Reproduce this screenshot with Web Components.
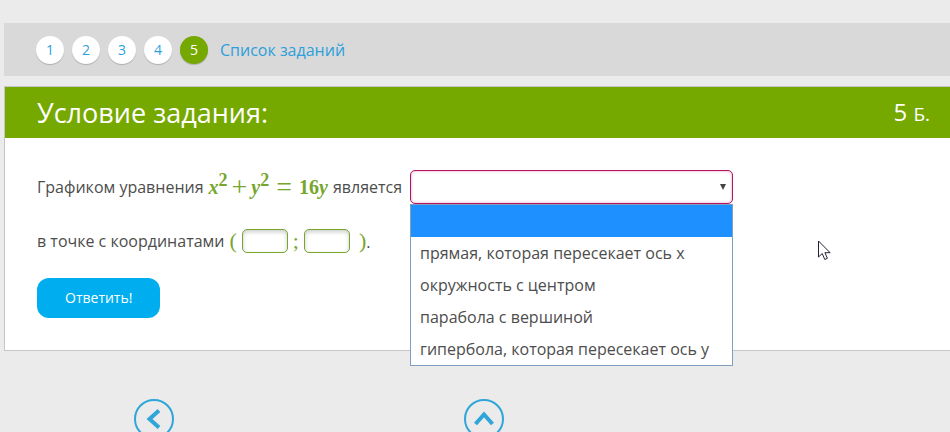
<!DOCTYPE html>
<html lang="ru">
<head>
<meta charset="utf-8">
<title>Условие задания</title>
<style>
    body {
        margin: 0;
        background: #ebebeb;
        color: #4d4d4d;
        font: 16px/24px "Open Sans", "Noto Sans", sans-serif;
    }
</style>
</head>
<body>

<test-page>
    <task-steps slot="steps" count="5" current="5">Список заданий</task-steps>
    <task-card>
        <span slot="title">Условие задания:</span>
        <span slot="points">5</span>
        <task-line>
            <span>Графиком уравнения</span>
            <math-formula></math-formula>
            <span>является</span>
            <drop-down label="Вид графика">
                <span>прямая, которая пересекает ось x</span>
                <span>окружность с центром</span>
                <span>парабола с вершиной</span>
                <span>гипербола, которая пересекает ось y</span>
            </drop-down>
        </task-line>
        <task-line>
            <span>в точке с координатами</span>
            <point-input></point-input>
        </task-line>
        <answer-button>Ответить!</answer-button>
    </task-card>
    <round-link slot="nav" direction="left" label="Предыдущее задание"></round-link>
    <round-link slot="nav" direction="up" label="Список заданий"></round-link>
</test-page>
<mouse-pointer></mouse-pointer>

<script>
window.customElements.define("test-page", class extends HTMLElement {

    #template = `
        <style>
            :host {
                display: block;
                padding: 23px 0 0 4px;
                overflow: hidden;
            }

            main {
                margin-top: 10px;
            }

            nav {
                display: flex;
                gap: 290px;
                padding: 48px 130px 0;
            }
        </style>

        <slot name="steps"></slot>
        <main><slot></slot></main>
        <nav><slot name="nav"></slot></nav>
    `;

    constructor() {
        super();
        this.attachShadow({ mode: "open" });
        this.shadowRoot.innerHTML = this.#template;
    }

});

window.customElements.define("task-steps", class extends HTMLElement {

    #template = `
        <style>
            :host {
                display: flex;
                align-items: center;
                gap: 8px;
                height: 53px;
                padding: 0 32px;
                background: #d9d9d9;
            }

            a {
                color: #2d9fdb;
                text-decoration: none;
            }

            .step {
                width: 28px;
                border-radius: 50%;
                background: white;
                box-shadow: 0 1px 1px rgba(0, 0, 0, .2);
                font-size: 14px;
                line-height: 28px;
                text-align: center;
            }

            .current {
                background: #76a900;
                color: white;
            }

            .all {
                margin-left: 4px;
            }
        </style>

        <a class="all" href="#list"><slot></slot></a>
    `;

    constructor() {
        super();
        this.attachShadow({ mode: "open" });
        this.shadowRoot.innerHTML = this.#template;
    }

    connectedCallback() {
        const all = this.shadowRoot.querySelector(".all");
        for (let i = 1; i <= Number(this.getAttribute("count")); i++) {
            const step = document.createElement("a");
            step.href = "#" + i;
            step.className = "step";
            step.textContent = i;
            if (i === Number(this.getAttribute("current"))) {
                step.classList.add("current");
            }
            all.before(step);
        }
    }

});

window.customElements.define("task-card", class extends HTMLElement {

    #template = `
        <style>
            :host {
                display: block;
                border: 1px #c6c6c6 solid;
                border-right: 0;
                background: white;
            }

            header {
                display: flex;
                justify-content: space-between;
                align-items: center;
                height: 51px;
                padding: 0 20px 0 32px;
                background: #76a900;
                color: white;
            }

            h1 {
                margin: 0;
                font-size: 27px;
                font-weight: 400;
            }

            .points {
                font-size: 24px;
            }

            small {
                font-size: 19px;
            }

            .content {
                padding: 32px;
            }
        </style>

        <header>
            <h1><slot name="title"></slot></h1>
            <div class="points"><slot name="points"></slot> <small>Б.</small></div>
        </header>
        <div class="content"><slot></slot></div>
    `;

    constructor() {
        super();
        this.attachShadow({ mode: "open" });
        this.shadowRoot.innerHTML = this.#template;
    }

});

window.customElements.define("task-line", class extends HTMLElement {

    #template = `
        <style>
            :host {
                display: flex;
                align-items: center;
                gap: 5px;
                height: 34px;
                margin-bottom: 20px;
                white-space: nowrap;
            }
        </style>

        <slot></slot>
    `;

    constructor() {
        super();
        this.attachShadow({ mode: "open" });
        this.shadowRoot.innerHTML = this.#template;
    }

});

window.customElements.define("math-formula", class extends HTMLElement {

    #template = `
        <style>
            :host {
                display: flex;
                color: #76a62c;
                font: bold 20px/24px "Liberation Serif", serif;
            }

            sup {
                font-size: 18px;
                line-height: 0;
                vertical-align: 8px;
            }

            .sign {
                margin: 0 4px;
                font-weight: 400;
                font-size: 28px;
            }

            .equals {
                margin: 0 7px;
            }
        </style>

        <span><i>x</i><sup>2</sup></span>
        <span class="sign">+</span>
        <span><i>y</i><sup>2</sup></span>
        <span class="sign equals">=</span>
        <span>16<i>y</i></span>
    `;

    constructor() {
        super();
        this.attachShadow({ mode: "open" });
        this.shadowRoot.innerHTML = this.#template;
    }

});

window.customElements.define("drop-down", class extends HTMLElement {

    #template = `
        <style>
            :host {
                display: block;
                position: relative;
                width: 323px;
                margin-left: 3px;
            }

            select {
                display: block;
                appearance: none;
                box-sizing: border-box;
                width: 100%;
                height: 34px;
                border: 1px #b5125f solid;
                border-radius: 5px;
                background: white;
                box-shadow: inset 0 0 3px rgba(181, 18, 95, .4);
                font: inherit;
                outline: 0;
            }

            .arrow {
                position: absolute;
                top: 14px;
                right: 7px;
                border: 3px transparent solid;
                border-top: 6px #444 solid;
                border-bottom: 0;
            }

            ul {
                position: absolute;
                z-index: 1;
                top: 100%;
                left: 0;
                right: 0;
                margin: 0;
                padding: 0;
                border: 1px #7f9fbf solid;
                background: white;
                list-style: none;
            }

            li {
                height: 32px;
                padding: 0 9px;
                line-height: 32px;
            }

            .selected {
                background: #1e90ff;
            }
        </style>

        <select></select>
        <span class="arrow"></span>
        <ul role="listbox">
            <li class="selected" role="option" aria-selected="true"></li>
        </ul>
    `;

    constructor() {
        super();
        this.attachShadow({ mode: "open" });
        this.shadowRoot.innerHTML = this.#template;
    }

    connectedCallback() {
        const select = this.shadowRoot.querySelector("select");
        const list = this.shadowRoot.querySelector("ul");
        select.setAttribute("aria-label", this.getAttribute("label"));
        select.add(new Option(""));
        [...this.children].forEach((child, index) => {
            select.add(new Option(child.textContent));
            const item = document.createElement("li");
            const slot = document.createElement("slot");
            item.setAttribute("role", "option");
            slot.name = child.slot = "option-" + index;
            item.append(slot);
            list.append(item);
        });
    }

});

window.customElements.define("point-input", class extends HTMLElement {

    #template = `
        <style>
            :host {
                display: flex;
                align-items: center;
                gap: 5px;
            }

            .sign {
                color: #76a62c;
                font: 22px/24px "Liberation Serif", serif;
            }

            input {
                box-sizing: border-box;
                width: 46px;
                height: 24px;
                border: 1px #76a62c solid;
                border-radius: 5px;
                background: white;
                box-shadow: inset 0 2px 4px rgba(0, 0, 0, .2);
                font: inherit;
            }

            .end {
                margin-left: 4px;
            }
        </style>

        <span class="sign">(</span>
        <input type="text" aria-label="Координата x">
        <span class="sign">;</span>
        <input type="text" aria-label="Координата y">
        <span class="end"><span class="sign">)</span>.</span>
    `;

    constructor() {
        super();
        this.attachShadow({ mode: "open" });
        this.shadowRoot.innerHTML = this.#template;
    }

});

window.customElements.define("answer-button", class extends HTMLElement {

    #template = `
        <style>
            :host {
                display: block;
            }

            button {
                display: block;
                height: 40px;
                padding: 0 28px;
                border: 0;
                border-radius: 12px;
                background: #00aeef;
                color: white;
                font: inherit;
                font-size: 14px;
                cursor: pointer;
            }
        </style>

        <button type="button"><slot></slot></button>
    `;

    constructor() {
        super();
        this.attachShadow({ mode: "open" });
        this.shadowRoot.innerHTML = this.#template;
    }

});

window.customElements.define("round-link", class extends HTMLElement {

    #template = `
        <style>
            :host {
                display: block;
            }

            svg {
                display: block;
                width: 40px;
                height: 40px;
                fill: none;
                stroke: #2fa5d9;
            }

            :host([direction="up"]) path {
                transform: rotate(90deg);
                transform-origin: 20px 20px;
            }
        </style>

        <a href="#">
            <svg viewBox="0 0 40 40">
                <circle cx="20" cy="20" r="19" stroke-width="2"/>
                <path d="M25 11.500 15.500 20l9.500 8.500" stroke-width="4"/>
            </svg>
        </a>
    `;

    constructor() {
        super();
        this.attachShadow({ mode: "open" });
        this.shadowRoot.innerHTML = this.#template;
    }

    connectedCallback() {
        this.shadowRoot.querySelector("a").setAttribute("aria-label", this.getAttribute("label"));
    }

});

window.customElements.define("mouse-pointer", class extends HTMLElement {

    #template = `
        <style>
            :host {
                position: absolute;
                top: 240px;
                left: 818px;
                pointer-events: none;
            }

            svg {
                display: block;
            }
        </style>

        <svg width="14" height="21" viewBox="0 0 14 21">
            <path d="M.5 1v16l3.700-3.500 2.600 6 2.600-1.200-2.500-5.600h5.200z" fill="white" stroke="#223"/>
        </svg>
    `;

    constructor() {
        super();
        this.attachShadow({ mode: "open" });
        this.shadowRoot.innerHTML = this.#template;
    }

});
</script>
</body>
</html>
